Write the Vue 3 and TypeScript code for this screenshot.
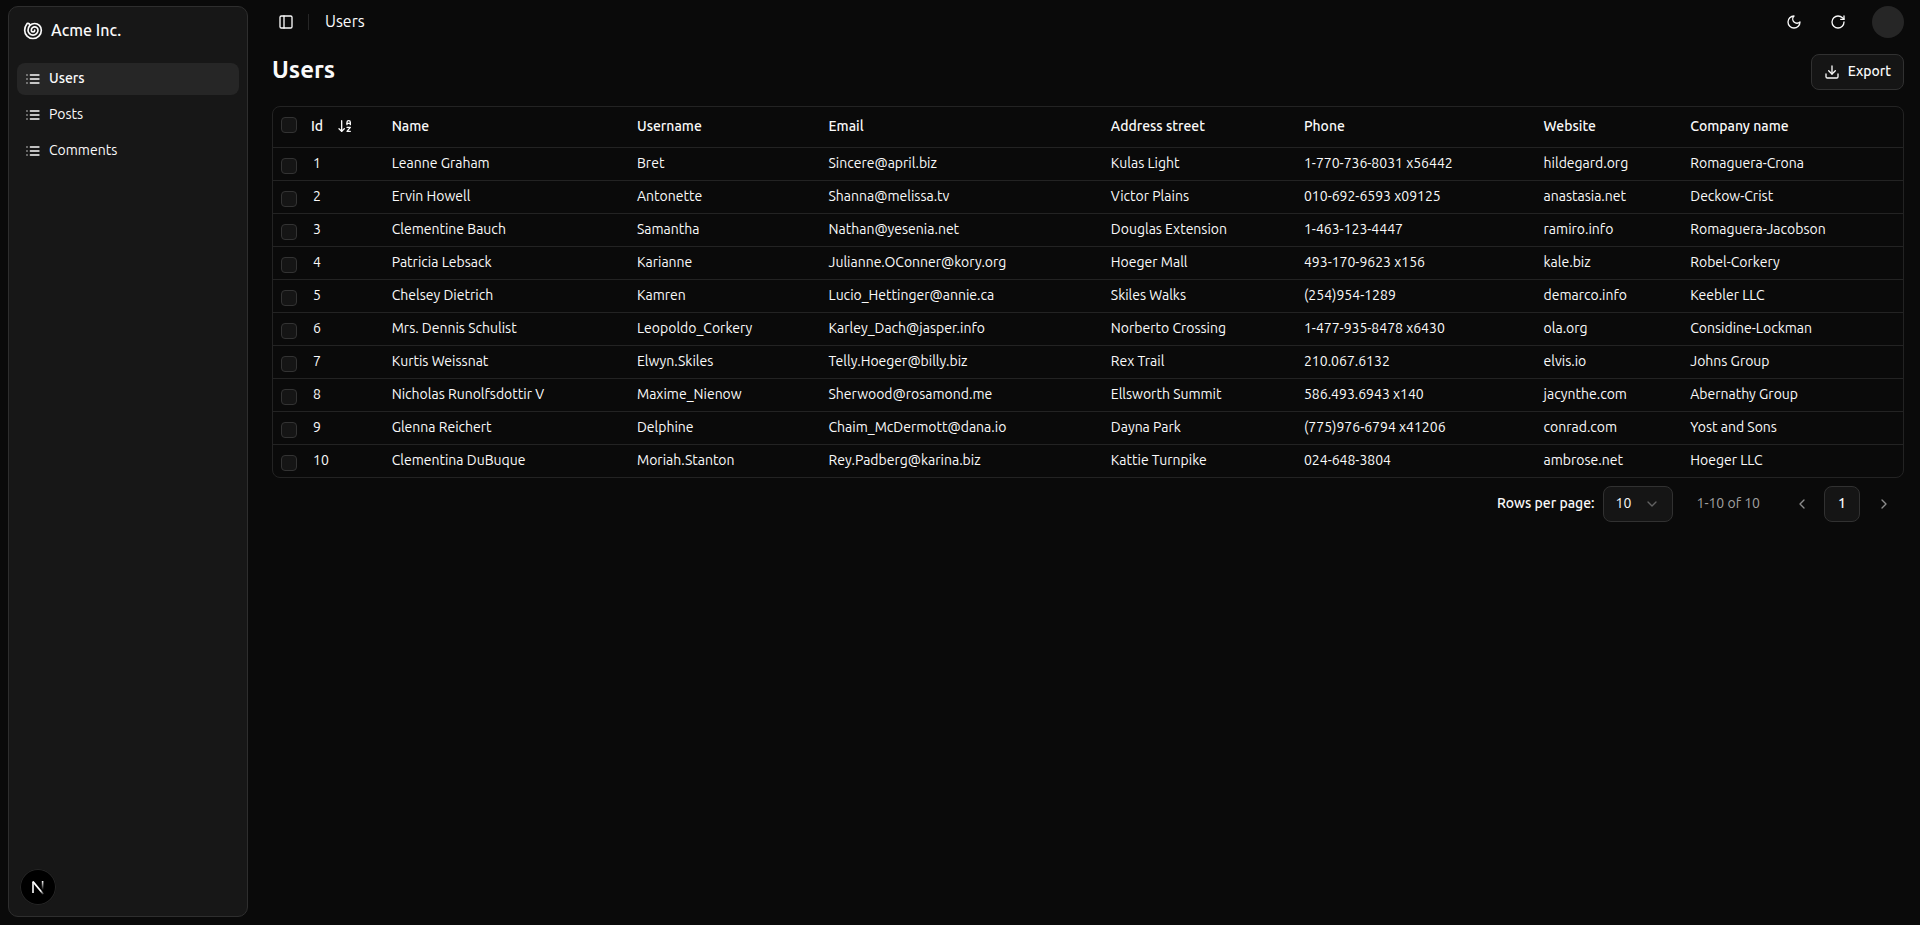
<script setup lang="ts">
import { computed, ref } from 'vue'

interface User {
  id: number
  name: string
  username: string
  email: string
  street: string
  phone: string
  website: string
  company: string
}

const resources = ['Users', 'Posts', 'Comments']
const active = ref('Users')
const pageSize = ref(10)
const selected = ref<number[]>([])

const columns = ['Name', 'Username', 'Email', 'Address street', 'Phone', 'Website', 'Company name']

const toUser = (r: string[], i: number): User => ({
  id: i + 1,
  name: r[0],
  username: r[1],
  email: r[2],
  street: r[3],
  phone: r[4],
  website: r[5],
  company: r[6],
})

const users: User[] = [
  ['Leanne Graham', 'Bret', 'Sincere@april.biz', 'Kulas Light', '1-770-736-8031 x56442', 'hildegard.org', 'Romaguera-Crona'],
  ['Ervin Howell', 'Antonette', 'Shanna@melissa.tv', 'Victor Plains', '010-692-6593 x09125', 'anastasia.net', 'Deckow-Crist'],
  ['Clementine Bauch', 'Samantha', 'Nathan@yesenia.net', 'Douglas Extension', '1-463-123-4447', 'ramiro.info', 'Romaguera-Jacobson'],
  ['Patricia Lebsack', 'Karianne', 'Julianne.OConner@kory.org', 'Hoeger Mall', '493-170-9623 x156', 'kale.biz', 'Robel-Corkery'],
  ['Chelsey Dietrich', 'Kamren', 'Lucio_Hettinger@annie.ca', 'Skiles Walks', '(254)954-1289', 'demarco.info', 'Keebler LLC'],
  ['Mrs. Dennis Schulist', 'Leopoldo_Corkery', 'Karley_Dach@jasper.info', 'Norberto Crossing', '1-477-935-8478 x6430', 'ola.org', 'Considine-Lockman'],
  ['Kurtis Weissnat', 'Elwyn.Skiles', 'Telly.Hoeger@billy.biz', 'Rex Trail', '210.067.6132', 'elvis.io', 'Johns Group'],
  ['Nicholas Runolfsdottir V', 'Maxime_Nienow', 'Sherwood@rosamond.me', 'Ellsworth Summit', '586.493.6943 x140', 'jacynthe.com', 'Abernathy Group'],
  ['Glenna Reichert', 'Delphine', 'Chaim_McDermott@dana.io', 'Dayna Park', '(775)976-6794 x41206', 'conrad.com', 'Yost and Sons'],
  ['Clementina DuBuque', 'Moriah.Stanton', 'Rey.Padberg@karina.biz', 'Kattie Turnpike', '024-648-3804', 'ambrose.net', 'Hoeger LLC'],
].map(toUser)

const allSelected = computed({
  get: () => selected.value.length === users.length,
  set: (on: boolean) => {
    selected.value = on ? users.map((u) => u.id) : []
  },
})
</script>

<template>
  <div class="shell">
    <aside class="sidebar">
      <a class="brand" href="#">
        <svg class="icon logo" viewBox="0 0 24 24" aria-hidden="true">
          <path d="M14 11a2 2 0 1 1-4 0 4 4 0 0 1 8 0 6 6 0 0 1-12 0 8 8 0 0 1 16 0 10 10 0 1 1-20 0 11.93 11.93 0 0 1 2.42-7.22 2 2 0 1 1 3.16 2.44" />
        </svg>
        <span class="label">Acme Inc.</span>
      </a>
      <nav class="menu">
        <a
          v-for="item in resources"
          :key="item"
          href="#"
          class="menu-item"
          :class="{ active: item === active }"
          @click.prevent="active = item"
        >
          <svg class="icon" viewBox="0 0 24 24" aria-hidden="true">
            <path d="M3 6h.01M3 12h.01M3 18h.01M8 6h13M8 12h13M8 18h13" />
          </svg>
          <span class="label">{{ item }}</span>
        </a>
      </nav>
      <button class="dev-badge" type="button" aria-label="Developer tools">
        <svg viewBox="0 0 36 36" fill="none" aria-hidden="true">
          <defs>
            <linearGradient id="diagonal" gradientUnits="userSpaceOnUse" x1="19" y1="19" x2="24" y2="25">
              <stop offset="0.4" stop-color="#fff" />
              <stop offset="1" stop-color="#fff" stop-opacity="0.1" />
            </linearGradient>
            <linearGradient id="stem" gradientUnits="userSpaceOnUse" x1="22" y1="12" x2="22" y2="21">
              <stop offset="0" stop-color="#fff" />
              <stop offset="1" stop-color="#fff" stop-opacity="0" />
            </linearGradient>
          </defs>
          <path d="M13 24V12.500" stroke="#fff" stroke-width="1.6" />
          <path d="M13 12.600l10.400 12.600" stroke="url(#diagonal)" stroke-width="1.7" />
          <path d="M22.600 12v9" stroke="url(#stem)" stroke-width="1.6" />
        </svg>
      </button>
    </aside>

    <main class="content">
      <header class="topbar">
        <button class="icon-button toggle" type="button" aria-label="Toggle sidebar">
          <svg class="icon" viewBox="0 0 24 24" aria-hidden="true">
            <rect x="3" y="3" width="18" height="18" rx="2" />
            <path d="M9 3v18" />
          </svg>
        </button>
        <span class="separator"></span>
        <span class="crumb label">Users</span>
        <div class="actions">
          <button class="icon-button" type="button" aria-label="Toggle theme">
            <svg class="icon" viewBox="0 0 24 24" aria-hidden="true">
              <path d="M12 3a6 6 0 0 0 9 9 9 9 0 1 1-9-9Z" />
            </svg>
          </button>
          <button class="icon-button" type="button" aria-label="Refresh">
            <svg class="icon" viewBox="0 0 24 24" aria-hidden="true">
              <path d="M21 12a9 9 0 1 1-9-9c2.52 0 4.93 1 6.74 2.74L21 8" />
              <path d="M21 3v5h-5" />
            </svg>
          </button>
          <button class="avatar" type="button" aria-label="Account"></button>
        </div>
      </header>

      <div class="heading">
        <h1>Users</h1>
        <button class="outline export" type="button">
          <svg class="icon" viewBox="0 0 24 24" aria-hidden="true">
            <path d="M12 15V3" />
            <path d="M21 15v4a2 2 0 0 1-2 2H5a2 2 0 0 1-2-2v-4" />
            <path d="m7 10 5 5 5-5" />
          </svg>
          <span class="label">Export</span>
        </button>
      </div>

      <div class="table-frame">
        <table>
          <colgroup>
            <col class="c-check" />
            <col class="c-id" />
            <col class="c-name" />
            <col class="c-username" />
            <col class="c-email" />
            <col class="c-street" />
            <col class="c-phone" />
            <col class="c-website" />
            <col class="c-company" />
          </colgroup>
          <thead>
            <tr>
              <th class="check">
                <input v-model="allSelected" type="checkbox" aria-label="Select all" />
              </th>
              <th>
                <button class="sort" type="button">
                  <span>Id</span>
                  <svg class="icon" viewBox="0 0 24 24" aria-hidden="true">
                    <path d="m3 16 4 4 4-4" />
                    <path d="M7 20V4" />
                    <path d="M20 8h-5" />
                    <path d="M15 10V6.500a2.500 2.500 0 0 1 5 0V10" />
                    <path d="M15 14h5l-5 6h5" />
                  </svg>
                </button>
              </th>
              <th v-for="c in columns" :key="c">{{ c }}</th>
            </tr>
          </thead>
          <tbody>
            <tr v-for="u in users" :key="u.id">
              <td class="check">
                <input v-model="selected" type="checkbox" :value="u.id" :aria-label="`Select ${u.name}`" />
              </td>
              <td class="id">{{ u.id }}</td>
              <td>{{ u.name }}</td>
              <td>{{ u.username }}</td>
              <td>{{ u.email }}</td>
              <td>{{ u.street }}</td>
              <td>{{ u.phone }}</td>
              <td>{{ u.website }}</td>
              <td>{{ u.company }}</td>
            </tr>
          </tbody>
        </table>
      </div>

      <footer class="pagination">
        <label class="label" for="page-size">Rows per page:</label>
        <div class="select">
          <select id="page-size" v-model="pageSize" class="outline">
            <option :value="5">5</option>
            <option :value="10">10</option>
            <option :value="25">25</option>
            <option :value="50">50</option>
          </select>
          <svg class="icon" viewBox="0 0 24 24" aria-hidden="true"><path d="m6 9 6 6 6-6" /></svg>
        </div>
        <span class="range label">1-10 of 10</span>
        <nav class="pages" aria-label="Pagination">
          <button class="step" type="button" disabled aria-label="Previous page">
            <svg class="icon" viewBox="0 0 24 24" aria-hidden="true"><path d="m15 18-6-6 6-6" /></svg>
          </button>
          <button class="outline page" type="button" aria-current="page">1</button>
          <button class="step" type="button" disabled aria-label="Next page">
            <svg class="icon" viewBox="0 0 24 24" aria-hidden="true"><path d="m9 18 6-6-6-6" /></svg>
          </button>
        </nav>
      </footer>
    </main>
  </div>
</template>

<style>
body {
  margin: 0;
  background: #0a0a0a;
}
</style>

<style scoped>
* {
  box-sizing: border-box;
}
.shell {
  display: flex;
  min-height: 100vh;
  background: #0a0a0a;
  color: #fafafa;
  font-family: Ubuntu, 'Noto Sans', 'Open Sans', sans-serif;
  font-size: 14px;
  line-height: 20px;
  color-scheme: dark;
}
button,
select {
  padding: 0;
  border: 0;
  background: none;
  color: inherit;
  font: inherit;
}
a {
  color: inherit;
  text-decoration: none;
}
.icon {
  flex: none;
  width: 16px;
  height: 16px;
  fill: none;
  stroke: currentColor;
  stroke-width: 2;
  stroke-linecap: round;
  stroke-linejoin: round;
}
.label {
  padding-bottom: 2px;
}
.sidebar {
  position: relative;
  flex: none;
  display: flex;
  flex-direction: column;
  gap: 16px;
  width: 240px;
  margin: 6px 8px 8px;
  padding: 8px;
  border: 1px solid #2e2e2e;
  border-radius: 10px;
  background: #171717;
}
.brand {
  display: flex;
  align-items: center;
  gap: 8px;
  height: 32px;
  padding: 0 6px;
  font-size: 16px;
  font-weight: 500;
}
.icon.logo {
  width: 20px;
  height: 20px;
}
.menu {
  display: flex;
  flex-direction: column;
  gap: 4px;
}
.menu-item {
  display: flex;
  align-items: center;
  gap: 8px;
  height: 32px;
  padding: 0 8px;
  border-radius: 8px;
}
.menu-item.active {
  background: #262626;
  font-weight: 500;
}
.dev-badge {
  position: absolute;
  left: 11px;
  bottom: 11px;
  width: 36px;
  height: 36px;
  border-radius: 50%;
  background: #000;
  box-shadow: inset 0 0 0 1px #262626;
}
.dev-badge svg {
  display: block;
  width: 36px;
  height: 36px;
}
.content {
  flex: 1;
  min-width: 0;
  padding: 6px 16px 16px;
}
.topbar {
  display: flex;
  align-items: center;
  height: 32px;
}
.icon-button {
  display: grid;
  place-items: center;
  width: 36px;
  height: 32px;
}
.toggle {
  width: 28px;
}
.separator {
  width: 1px;
  height: 16px;
  margin: 0 16px 0 8px;
  background: #262626;
}
.crumb {
  font-size: 16px;
}
.actions {
  display: flex;
  align-items: center;
  gap: 8px;
  margin-left: auto;
}
.avatar {
  width: 32px;
  height: 32px;
  margin-left: 8px;
  border-radius: 50%;
  background: #262626;
}
.heading {
  display: flex;
  align-items: flex-start;
  justify-content: space-between;
  margin: 16px 0;
}
h1 {
  margin: 0;
  font-size: 24px;
  line-height: 32px;
  font-weight: 600;
}
.outline {
  height: 36px;
  border: 1px solid #313131;
  border-radius: 8px;
  background: #151515;
}
.export {
  display: flex;
  align-items: center;
  gap: 8px;
  padding: 0 12px;
  font-weight: 500;
}
.table-frame {
  overflow: hidden;
  border: 1px solid #232323;
  border-radius: 8px;
}
table {
  width: 100%;
  table-layout: fixed;
  border-collapse: separate;
  border-spacing: 0;
}
.c-check {
  width: 30px;
}
.c-id {
  width: 4.95%;
}
.c-name {
  width: 15.05%;
}
.c-username {
  width: 11.75%;
}
.c-email {
  width: 17.32%;
}
.c-street {
  width: 11.85%;
}
.c-phone {
  width: 14.7%;
}
.c-website {
  width: 9%;
}
th,
td {
  padding: 0 8px 2px;
  text-align: left;
  white-space: nowrap;
  border-bottom: 1px solid #232323;
}
th {
  height: 41px;
  font-weight: 500;
}
td {
  height: 33px;
}
tbody tr:last-child td {
  height: 32px;
  border-bottom: 0;
}
td.id {
  padding-left: 10px;
}
.check {
  padding: 10px 0 0 8px;
  vertical-align: top;
}
input[type='checkbox'] {
  display: block;
  appearance: none;
  width: 16px;
  height: 16px;
  margin: 0;
  border: 1px solid #333;
  border-radius: 4px;
  background: #151515;
}
input[type='checkbox']:checked {
  background: #e5e5e5;
}
.sort {
  display: flex;
  align-items: center;
  gap: 14px;
  font-weight: 500;
}
.pagination {
  display: flex;
  align-items: center;
  justify-content: flex-end;
  margin-top: 8px;
}
.pagination label {
  margin-right: 8px;
  font-weight: 500;
}
.select {
  display: grid;
  align-items: center;
  width: 70px;
}
.select > * {
  grid-area: 1 / 1;
}
.select select {
  width: 100%;
  padding: 0 12px 2px;
  appearance: none;
}
.select .icon {
  margin-right: 13px;
  justify-self: end;
  color: #626262;
  pointer-events: none;
}
.range {
  margin: 0 24px;
  color: #a1a1a1;
}
.pages {
  display: flex;
  gap: 4px;
}
.step {
  display: grid;
  place-items: center;
  width: 36px;
  height: 36px;
  color: #8c8c8c;
}
.step:last-child {
  width: 40px;
}
.page {
  width: 36px;
  padding-bottom: 2px;
  font-weight: 500;
}
</style>
